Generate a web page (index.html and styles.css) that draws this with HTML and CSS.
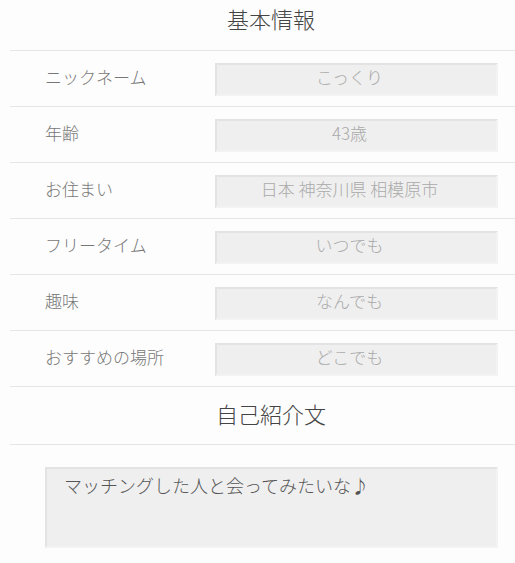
FILE: index.html
```html
<!DOCTYPE html>
<html lang="ja">
<head>
	<meta charset="UTF-8">
	<title>プロフィール</title>
	<link rel="stylesheet" href="styles.css">
</head>
<body>
	<div id="profile">
		<h2 class="sec-head">基本情報</h2>
		<ul class="info-list">
			<li class="info-row">
				<span class="info-label">ニックネーム</span>
				<input class="info-val" type="text" value="こっくり" readonly>
			</li>
			<li class="info-row">
				<span class="info-label">年齢</span>
				<input class="info-val" type="text" value="43歳" readonly>
			</li>
			<li class="info-row">
				<span class="info-label">お住まい</span>
				<input class="info-val" type="text" value="日本 神奈川県 相模原市" readonly>
			</li>
			<li class="info-row">
				<span class="info-label">フリータイム</span>
				<input class="info-val" type="text" value="いつでも" readonly>
			</li>
			<li class="info-row">
				<span class="info-label">趣味</span>
				<input class="info-val" type="text" value="なんでも" readonly>
			</li>
			<li class="info-row">
				<span class="info-label">おすすめの場所</span>
				<input class="info-val" type="text" value="どこでも" readonly>
			</li>
		</ul>
		<h2 class="sec-head sec-head2">自己紹介文</h2>
		<div class="intro">
			<textarea class="intro-txt" readonly>マッチングした人と会ってみたいな♪</textarea>
		</div>
	</div>
</body>
</html>
```

FILE: styles.css
```css
*{
	margin: 0;
	padding: 0;
	box-sizing: border-box;
}
html,body{
	overflow: hidden;
}
body{
	background: #fdfdfd;
	font-family: "Noto Sans CJK JP", "Noto Sans", sans-serif;
	font-weight: 300;
	color: #777;
}
#profile{
	margin-left: 10px;
	width: 522px;
}
/*見出し*/
.sec-head{
	height: 51px;
	line-height: 36px;
	padding-bottom: 14px;
	border-bottom: 1px solid #e6e6e6;
	text-align: center;
	font-size: 22px;
	font-weight: 300;
	color: #444;
}
.sec-head2{
	height: 58px;
	line-height: 52px;
	padding-bottom: 4px;
}
/*基本情報の行*/
.info-list{
	list-style: none;
}
.info-row{
	display: flex;
	align-items: center;
	height: 56px;
	padding: 0 34px 0 35px;
	border-bottom: 1px solid #e6e6e6;
}
.info-label{
	width: 170px;
	font-size: 17px;
	line-height: 20px;
	padding-bottom: 3px;
	color: #777;
}
.info-val{
	flex: 1;
	height: 33px;
	margin-top: 1px;
	padding: 0 14px 5px 0;
	border: 2px solid;
	border-color: #e3e3e3 #f3f3f3 #f3f3f3 #e3e3e3;
	background: #efefef;
	text-align: center;
	font-family: inherit;
	font-weight: 300;
	font-size: 17px;
	color: #aaa;
	outline: none;
}
/*自己紹介文*/
.intro{
	padding: 22px 34px 0 35px;
}
.intro-txt{
	display: block;
	width: 100%;
	height: 81px;
	padding: 2px 17px;
	border: 2px solid;
	border-color: #e3e3e3 #f3f3f3 #f3f3f3 #e3e3e3;
	background: #efefef;
	font-family: inherit;
	font-weight: 300;
	font-size: 18px;
	line-height: 28px;
	color: #555;
	resize: none;
	outline: none;
}
```
